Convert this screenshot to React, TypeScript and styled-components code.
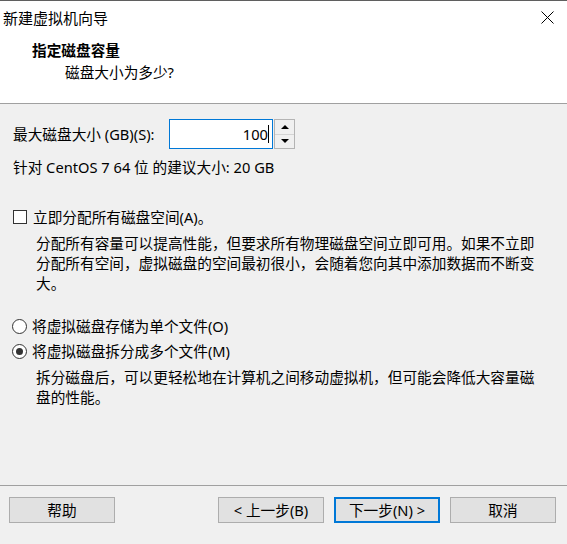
import styled, { createGlobalStyle } from "styled-components";

const GlobalStyle = createGlobalStyle`
  html, body {
    margin: 0;
    padding: 0;
    background: #f0f0f0;
  }
  body {
    font-family: "Noto Sans", "Noto Sans CJK SC", sans-serif;
    font-size: 14.67px;
    color: #000;
  }
`;

const Window = styled.div`
  width: 567px;
  height: 544px;
  box-sizing: border-box;
  border-top: 1px solid #5f5f5f;
  background: #f0f0f0;
  display: flex;
  flex-direction: column;
  overflow: hidden;
`;

const TitleBar = styled.div`
  height: 32px;
  background: #fff;
  display: flex;
  align-items: center;
  justify-content: space-between;
  padding-left: 3px;
`;

const Title = styled.span`
  font-size: 15px;
  line-height: 20px;
  margin-top: 1px;
`;

const CloseButton = styled.div`
  width: 40px;
  height: 32px;
  display: flex;
  align-items: center;
  justify-content: center;
`;

const Header = styled.div`
  height: 70px;
  background: #fff;
  border-bottom: 1px solid #a0a0a0;
  padding-left: 32px;
  display: flex;
  flex-direction: column;
`;

const Heading = styled.div`
  font-weight: 700;
  line-height: 20px;
  margin-top: 7px;
`;

const SubHeading = styled.div`
  line-height: 20px;
  margin-top: 2px;
  margin-left: 33px;
`;

const Body = styled.div`
  flex: 1;
  display: flex;
  flex-direction: column;
  padding: 0 12px 0 13px;
`;

const SizeRow = styled.div`
  display: flex;
  align-items: center;
  margin-top: 15px;
  height: 30px;
`;

const Label = styled.span`
  width: 156px;
  line-height: 20px;
`;

const SpinBox = styled.div`
  display: flex;
  height: 30px;
`;

const NumberField = styled.div`
  width: 99px;
  height: 28px;
  border: 1px solid #0078d7;
  background: #fff;
  display: flex;
  align-items: center;
  justify-content: flex-end;
  padding-right: 3px;
  margin-right: 1px;
`;

const Caret = styled.span`
  display: inline-block;
  width: 1px;
  height: 18px;
  background: #000;
`;

const Spinner = styled.div`
  width: 19px;
  height: 28px;
  border: 1px solid #b4b4b4;
  display: flex;
  flex-direction: column;
`;

const SpinHalf = styled.div<{ $down?: boolean }>`
  flex: 1;
  display: flex;
  align-items: center;
  justify-content: center;
  background: #f0f0f0;
  border-top: ${(p) => (p.$down ? "1px solid #d4d4d4" : "none")};
`;

const Triangle = styled.span<{ $down?: boolean }>`
  width: 0;
  height: 0;
  border-left: 4px solid transparent;
  border-right: 4px solid transparent;
  ${(p) =>
    p.$down ? "border-top: 4px solid #000;" : "border-bottom: 4px solid #000;"}
`;

const Hint = styled.div`
  line-height: 20px;
  margin-top: 8px;
`;

const OptionRow = styled.div<{ $gap: number }>`
  display: flex;
  align-items: center;
  line-height: 20px;
  margin-top: ${(p) => p.$gap}px;
`;

const CheckBox = styled.span`
  width: 12px;
  height: 12px;
  border: 1px solid #333;
  background: #fff;
  margin-right: 6px;
  flex-shrink: 0;
`;

const Radio = styled.span<{ $checked?: boolean }>`
  width: 13px;
  height: 13px;
  border: 1px solid #333;
  border-radius: 50%;
  background: #fff;
  margin-right: 5px;
  margin-left: -1px;
  flex-shrink: 0;
  display: flex;
  align-items: center;
  justify-content: center;

  &::after {
    content: "";
    width: 7px;
    height: 7px;
    border-radius: 50%;
    background: ${(p) => (p.$checked ? "#333" : "transparent")};
  }
`;

const Description = styled.p`
  margin: 6px 0 0 23px;
  line-height: 20px;
  width: 500px;
`;

const Footer = styled.div`
  margin-top: auto;
  border-top: 1px solid #a0a0a0;
  height: 47px;
  display: flex;
  justify-content: space-between;
  padding: 11px 11px 0 9px;
`;

const ButtonGroup = styled.div`
  display: flex;
  gap: 10px;
`;

const Button = styled.button<{ $primary?: boolean }>`
  width: 106px;
  height: 26px;
  background: #e1e1e1;
  border: ${(p) => (p.$primary ? "2px solid #0078d7" : "1px solid #adadad")};
  font-family: inherit;
  font-size: 14.67px;
  color: #000;
  padding: 0;
  line-height: 20px;
`;

export default function App() {
  return (
    <>
      <GlobalStyle />
      <Window>
        <TitleBar>
          <Title>新建虚拟机向导</Title>
          <CloseButton>
            <svg width="13" height="13" viewBox="0 0 13 13">
              <path d="M0.5 0.5 L12.5 12.5 M12.5 0.5 L0.5 12.5" stroke="#000" strokeWidth="1" />
            </svg>
          </CloseButton>
        </TitleBar>
        <Header>
          <Heading>指定磁盘容量</Heading>
          <SubHeading>磁盘大小为多少?</SubHeading>
        </Header>
        <Body>
          <SizeRow>
            <Label>最大磁盘大小 (GB)(S):</Label>
            <SpinBox>
              <NumberField>
                100
                <Caret />
              </NumberField>
              <Spinner>
                <SpinHalf>
                  <Triangle />
                </SpinHalf>
                <SpinHalf $down>
                  <Triangle $down />
                </SpinHalf>
              </Spinner>
            </SpinBox>
          </SizeRow>
          <Hint>针对 CentOS 7 64 位 的建议大小: 20 GB</Hint>
          <OptionRow $gap={30}>
            <CheckBox />
            立即分配所有磁盘空间(A)。
          </OptionRow>
          <Description>
            分配所有容量可以提高性能，但要求所有物理磁盘空间立即可用。如果不立即分配所有空间，虚拟磁盘的空间最初很小，会随着您向其中添加数据而不断变大。
          </Description>
          <OptionRow $gap={23}>
            <Radio />
            将虚拟磁盘存储为单个文件(O)
          </OptionRow>
          <OptionRow $gap={5}>
            <Radio $checked />
            将虚拟磁盘拆分成多个文件(M)
          </OptionRow>
          <Description>
            拆分磁盘后，可以更轻松地在计算机之间移动虚拟机，但可能会降低大容量磁盘的性能。
          </Description>
        </Body>
        <Footer>
          <Button>帮助</Button>
          <ButtonGroup>
            <Button>&lt; 上一步(B)</Button>
            <Button $primary>下一步(N) &gt;</Button>
            <Button>取消</Button>
          </ButtonGroup>
        </Footer>
      </Window>
    </>
  );
}
